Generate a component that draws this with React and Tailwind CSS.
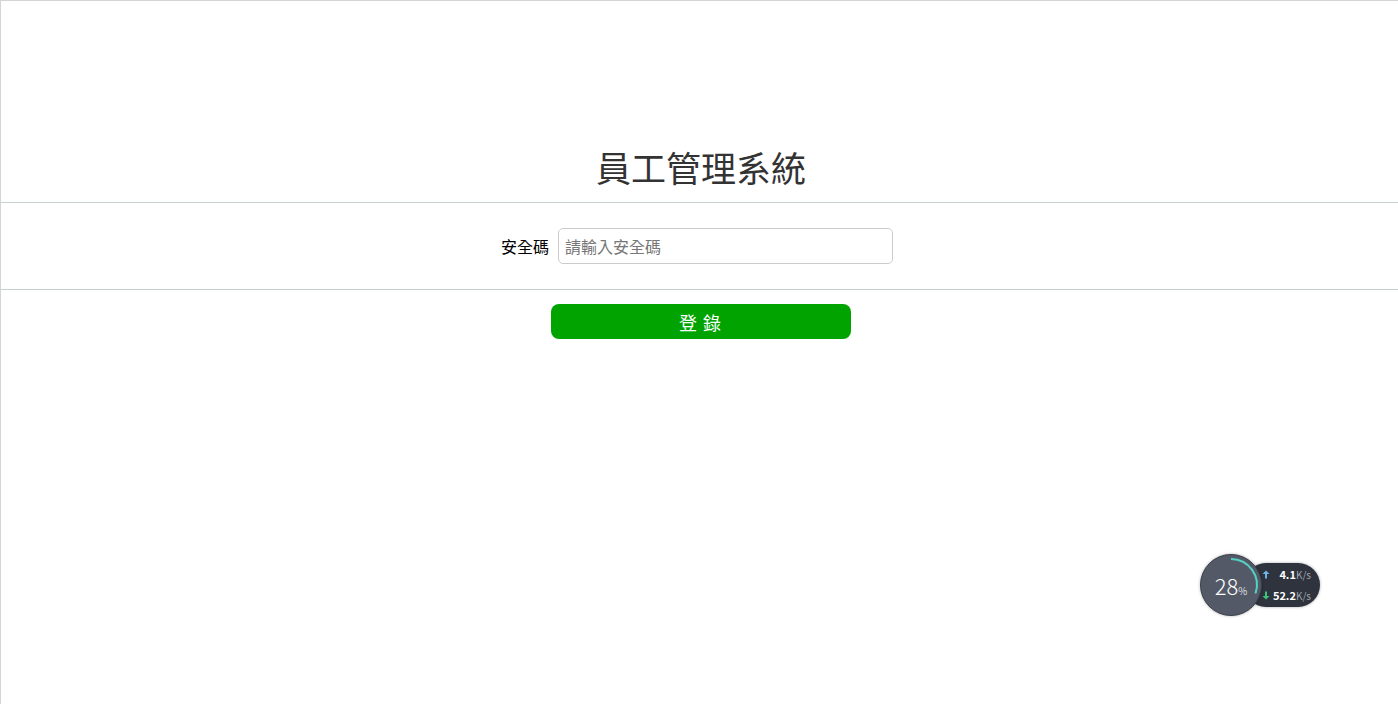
import React from "react"

const Arrow = ({ up, color }) => (
  <svg width="8" height="9" viewBox="0 0 8 9" className={up ? "" : "rotate-180"}>
    <path d="M4 0.5 L7.5 4 L5 4 L5 8.5 L3 8.5 L3 4 L0.5 4 Z" fill={color} />
  </svg>
)

const SpeedWidget = () => {
  return (
    <div className="absolute left-[1199px] top-[553px] w-[122px] h-[62px]">
      <div className="absolute left-[44px] top-[9px] w-[76px] h-[44px] rounded-full bg-[#2e333d] shadow-[0_0_3px_rgba(0,0,0,0.35)] flex flex-col justify-center pl-[18px] gap-[10px] text-[11px] leading-none">
        <div className="flex items-center">
          <Arrow up color="#6fb2e6" />
          <span className="ml-auto mr-[9px] text-white font-semibold">
            4.1<span className="text-[#a0a6b0] font-normal text-[10px]">K/s</span>
          </span>
        </div>
        <div className="flex items-center">
          <Arrow color="#39c47a" />
          <span className="ml-auto mr-[9px] text-white font-semibold">
            52.2<span className="text-[#a0a6b0] font-normal text-[10px]">K/s</span>
          </span>
        </div>
      </div>
      <div className="absolute left-0 top-0 w-[62px] h-[62px] rounded-full bg-[#535967] border border-[#3a3f49] shadow-[0_0_3px_rgba(0,0,0,0.3)] flex items-center justify-center">
        <svg className="absolute inset-0" width="60" height="60" viewBox="0 0 60 60">
          <path
            d="M30 4 A26 26 0 0 1 54.5 38.5"
            fill="none"
            stroke="#54d1c2"
            strokeWidth="2"
          />
        </svg>
        <span className="text-white text-[22px] font-light leading-none">
          28<span className="text-[10px]">%</span>
        </span>
      </div>
    </div>
  )
}

const App = () => {
  return (
    <div
      className="relative w-[1398px] h-[704px] bg-white border-l border-t border-[#d4d4d4] overflow-hidden"
      style={{ fontFamily: '"Noto Sans CJK TC", "Noto Sans", sans-serif' }}
    >
      <div className="pt-[146px] pl-[3px]">
        <h1 className="text-center text-[35px] leading-[40px] text-[#333] font-normal">
          員工管理系統
        </h1>
      </div>
      <div className="mt-[15px] border-t border-b border-[#c7d0d0] h-[88px] flex items-center justify-center pr-[5px]">
        <label className="text-[16px] text-black mr-[9px]">安全碼</label>
        <input
          type="password"
          placeholder="請輸入安全碼"
          className="w-[335px] h-[36px] rounded-[5px] border border-[#cccccc] px-[6px] text-[16px] outline-none placeholder:text-[#777]"
        />
      </div>
      <div className="flex justify-center mt-[14px] pl-[2px]">
        <button className="w-[300px] h-[35px] rounded-[8px] bg-[#00a300] text-white text-[18px] leading-none tracking-[1px]">
          登 錄
        </button>
      </div>
      <SpeedWidget />
    </div>
  )
}

export default App
